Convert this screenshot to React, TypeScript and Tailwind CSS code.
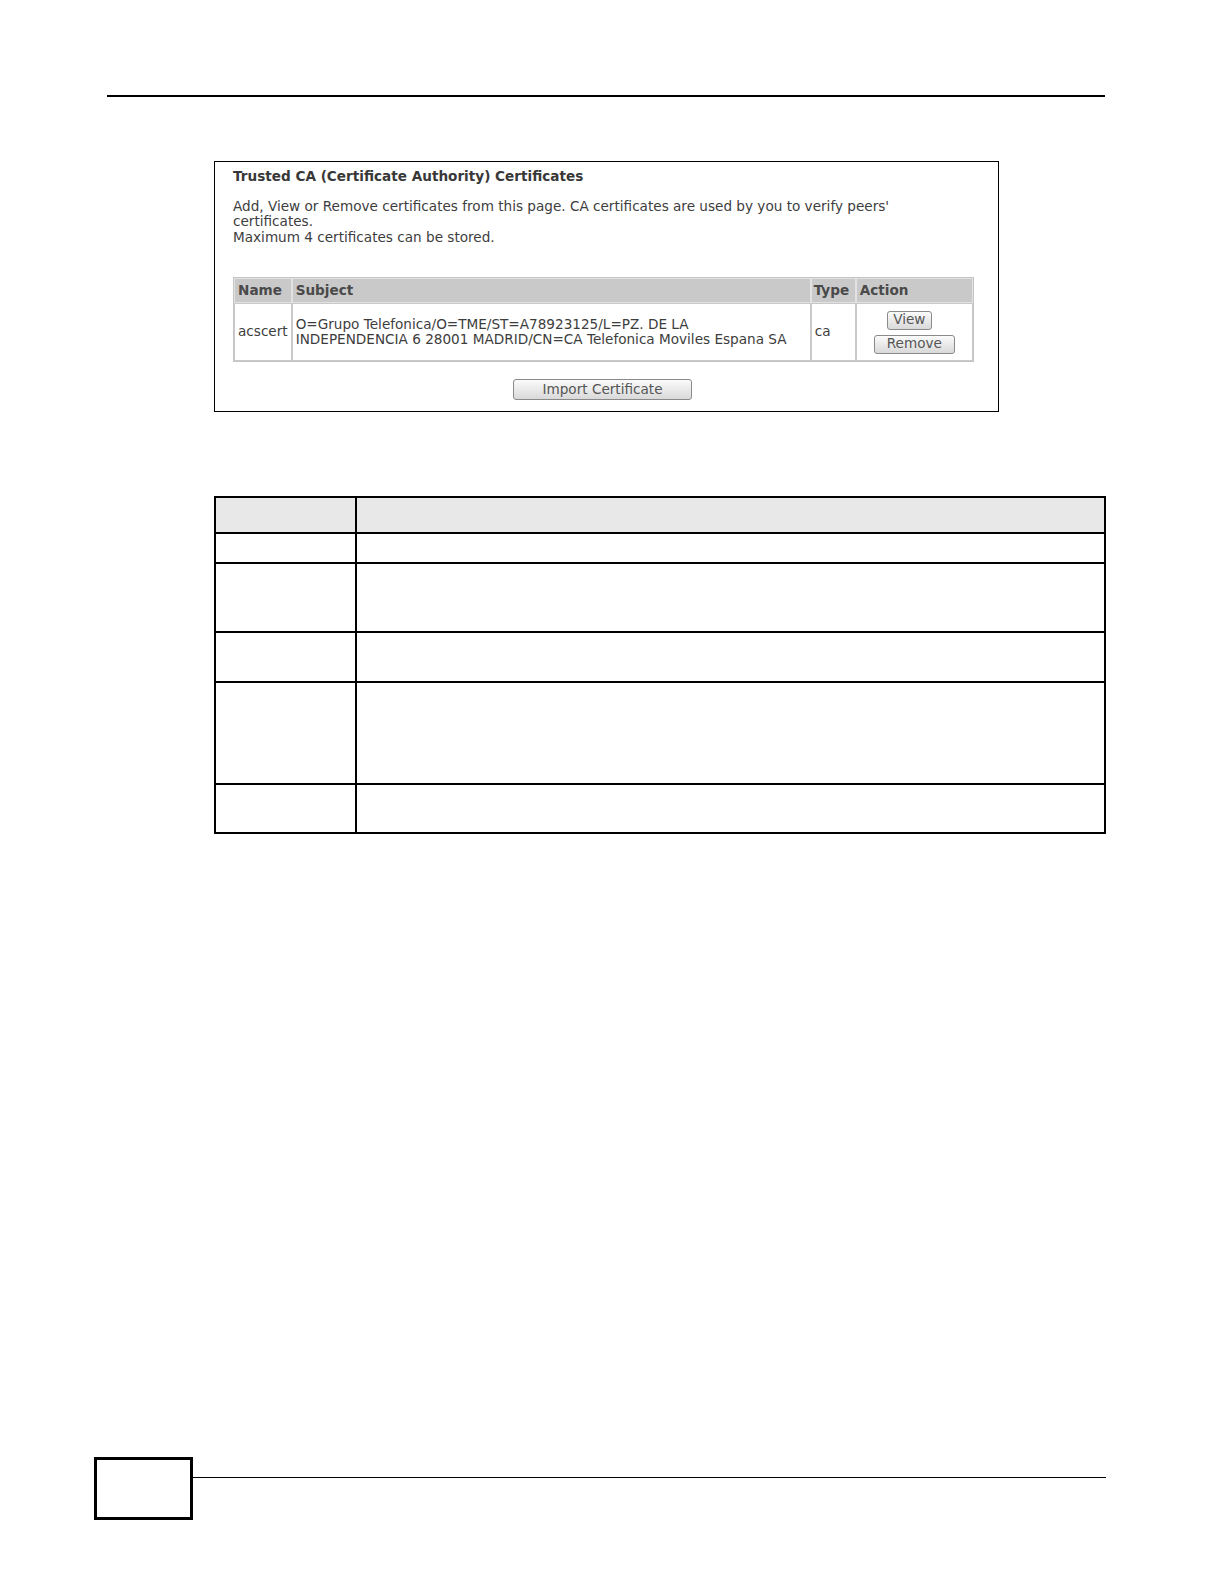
const font = { fontFamily: '"DejaVu Sans", Verdana, sans-serif' };

function GrayButton({ label, className }: { label: string; className: string }) {
  return (
    <button
      className={`flex items-center justify-center rounded-[3px] border border-[#8a8a8a] bg-gradient-to-b from-[#fbfbfb] to-[#d9d9d9] leading-none text-[#555] ${className}`}
    >
      {label}
    </button>
  );
}

function CertificatePanel() {
  return (
    <div className="ml-[214px] mt-[64px] h-[251px] w-[785px] shrink-0 border border-black bg-white pl-[18px] pt-[6px] text-[13.6px] text-[#3d3d3d]">
      <p className="font-bold leading-[16px] text-[#383838]">Trusted CA (Certificate Authority) Certificates</p>
      <div className="mt-[15px] leading-[15.5px]">
        <p>
          Add, View or Remove certificates from this page. CA certificates are used by you to verify peers'
          <br />
          certificates.
        </p>
        <p>Maximum 4 certificates can be stored.</p>
      </div>

      <table className="mt-[32px] w-[741px] border-separate border-spacing-0 border border-[#c4c4c4]">
        <thead>
          <tr className="h-[25px] bg-[#c9c9c9] text-left font-bold text-[#4a4a4a]">
            <th className="w-[56px] border border-[#e2e2e2] px-[3px]">Name</th>
            <th className="w-[519px] border border-[#e2e2e2] px-[3px]">Subject</th>
            <th className="w-[45px] border border-[#e2e2e2] px-[2px]">Type</th>
            <th className="border border-[#e2e2e2] px-[3px]">Action</th>
          </tr>
        </thead>
        <tbody>
          <tr className="h-[58px] leading-[15.5px]">
            <td className="border border-[#c9c9c9] px-[3px]">acscert</td>
            <td className="border border-[#c9c9c9] px-[3px]">
              O=Grupo Telefonica/O=TME/ST=A78923125/L=PZ. DE LA
              <br />
              INDEPENDENCIA 6 28001 MADRID/CN=CA Telefonica Moviles Espana SA
            </td>
            <td className="border border-[#c9c9c9] px-[3px]">ca</td>
            <td className="border border-[#c9c9c9]">
              <div className="flex flex-col items-center gap-[5px]">
                <GrayButton label="View" className="ml-[-10px] h-[19px] w-[45px] text-[13.6px]" />
                <GrayButton label="Remove" className="h-[19px] w-[81px] text-[13.6px]" />
              </div>
            </td>
          </tr>
        </tbody>
      </table>

      <div className="mt-[17px] flex justify-center pr-[18px]">
        <GrayButton label="Import Certificate" className="ml-[-8px] h-[21px] w-[179px] text-[13.6px]" />
      </div>
    </div>
  );
}

const rowHeights = [30, 69, 50, 102, 49];

function FieldTable() {
  return (
    <table className="ml-[214px] mt-[84px] w-[892px] shrink-0 border-collapse border-2 border-black">
      <thead>
        <tr className="h-[36px] bg-[#e8e8e8]">
          <th className="w-[141px] border-2 border-black" />
          <th className="border-2 border-black" />
        </tr>
      </thead>
      <tbody>
        {rowHeights.map((h, i) => (
          <tr key={i} style={{ height: h }}>
            <td className="border-2 border-black" />
            <td className="border-2 border-black" />
          </tr>
        ))}
      </tbody>
    </table>
  );
}

export default function App() {
  return (
    <div className="flex h-[1584px] w-[1224px] flex-col overflow-hidden bg-white" style={font}>
      <div className="ml-[107px] mt-[95px] h-[1.5px] w-[998px] shrink-0 bg-black" />
      <CertificatePanel />
      <FieldTable />
      <div className="ml-[94px] mt-[623px] flex shrink-0">
        <div className="h-[63px] w-[99px] border-[3px] border-black" />
        <div className="mt-[20px] h-[1.5px] w-[913px] bg-black" />
      </div>
    </div>
  );
}
